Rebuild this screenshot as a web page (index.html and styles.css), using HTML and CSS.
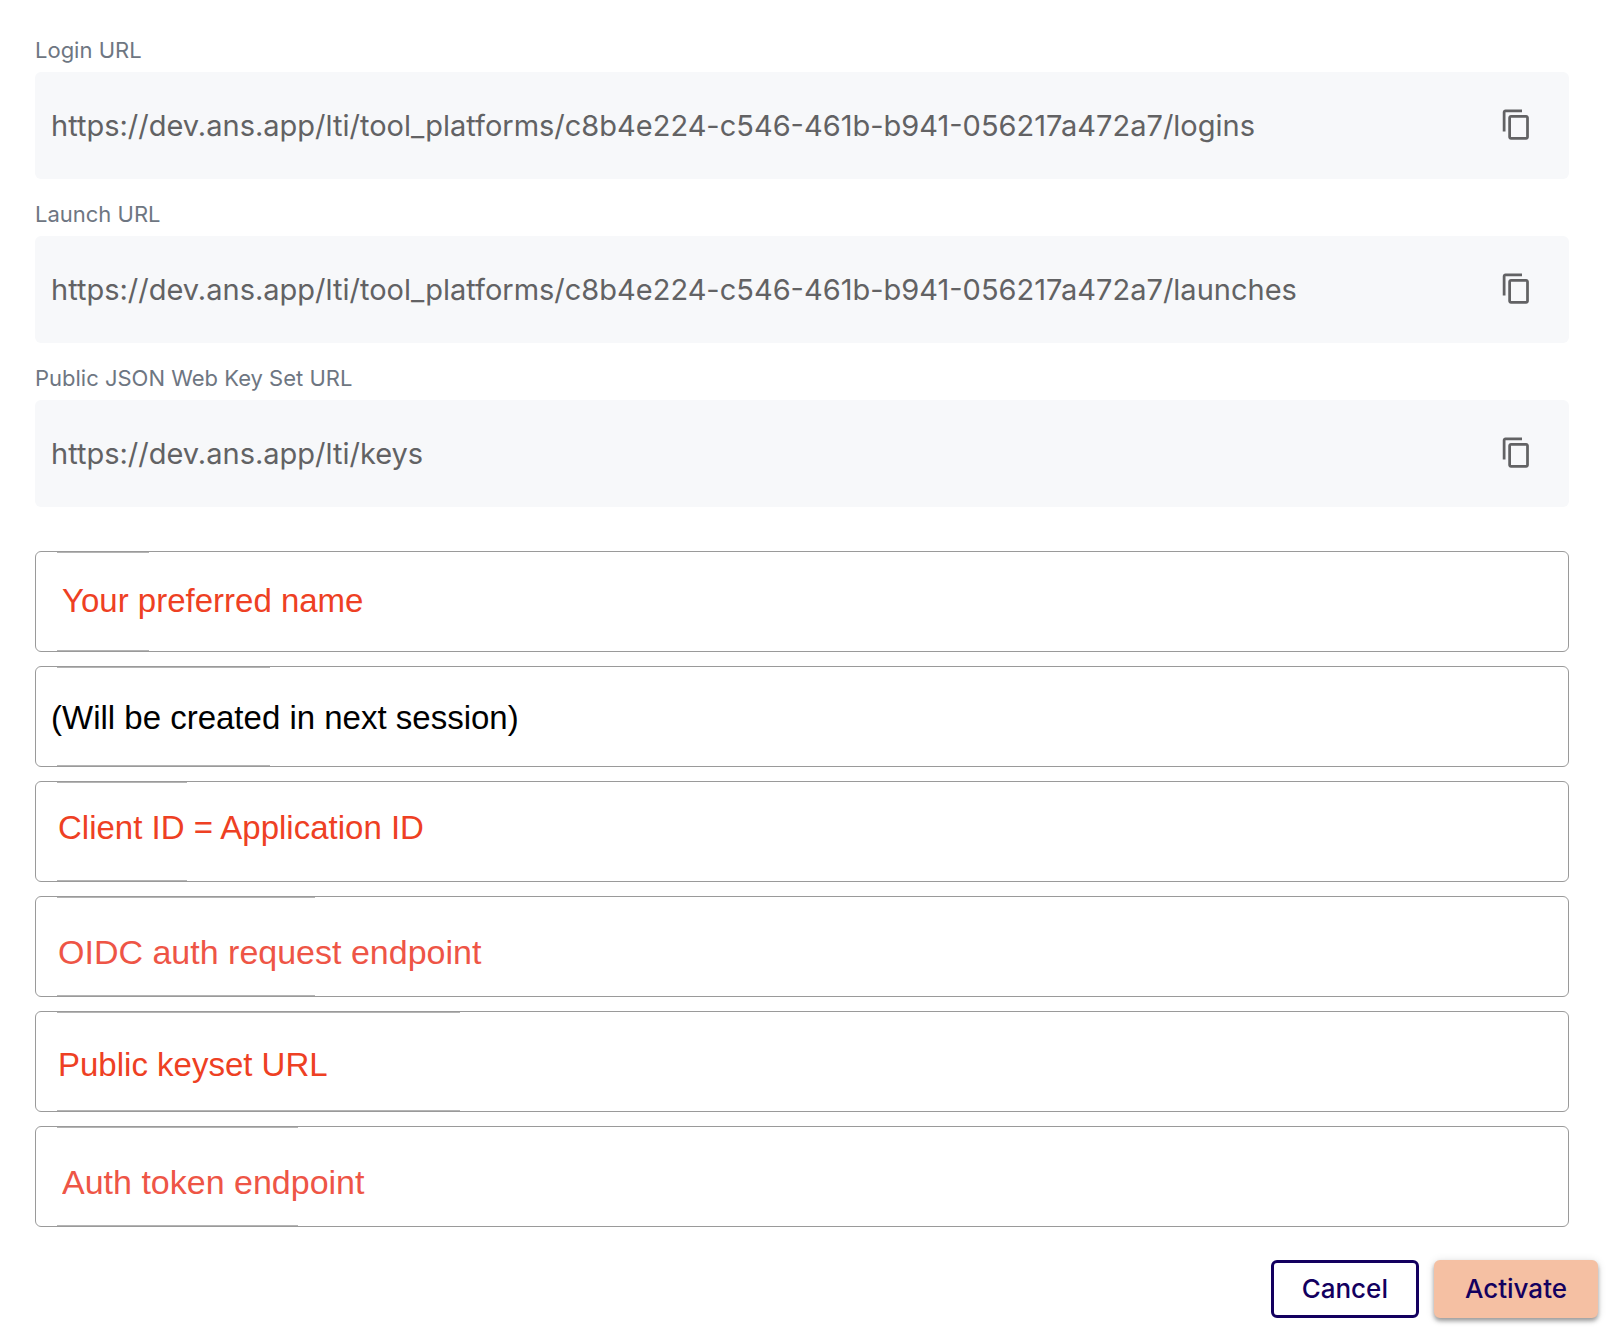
FILE: index.html
```html
<!DOCTYPE html>
<html lang="en">
<head>
<meta charset="utf-8">
<meta name="viewport" content="width=device-width, initial-scale=1">
<title>LTI tool platform</title>
<link rel="stylesheet" href="styles.css">
</head>
<body>
<svg class="sprite" width="0" height="0" aria-hidden="true">
  <symbol id="copy" viewBox="0 0 24 24">
    <path d="M16 1H4c-1.1 0-2 .9-2 2v14h2V3h12V1zm3 4H8c-1.1 0-2 .9-2 2v14c0 1.1.9 2 2 2h11c1.1 0 2-.9 2-2V7c0-1.1-.9-2-2-2zm0 16H8V7h11v14z"/>
  </symbol>
</svg>
<form class="platform">
  <section class="urls">
    <div class="url">
      <label class="url-label" for="login-url">Login URL</label>
      <div class="url-box">
        <input class="url-value" id="login-url" type="text" readonly value="https://dev.ans.app/lti/tool_platforms/c8b4e224-c546-461b-b941-056217a472a7/logins">
        <button class="copy" type="button" aria-label="Copy"><svg class="icon"><use href="#copy"/></svg></button>
      </div>
    </div>
    <div class="url">
      <label class="url-label" for="launch-url">Launch URL</label>
      <div class="url-box">
        <input class="url-value" id="launch-url" type="text" readonly value="https://dev.ans.app/lti/tool_platforms/c8b4e224-c546-461b-b941-056217a472a7/launches">
        <button class="copy" type="button" aria-label="Copy"><svg class="icon"><use href="#copy"/></svg></button>
      </div>
    </div>
    <div class="url">
      <label class="url-label" for="keys-url">Public JSON Web Key Set URL</label>
      <div class="url-box">
        <input class="url-value" id="keys-url" type="text" readonly value="https://dev.ans.app/lti/keys">
        <button class="copy" type="button" aria-label="Copy"><svg class="icon"><use href="#copy"/></svg></button>
      </div>
    </div>
  </section>

  <section class="fields">
    <div class="field">
      <span class="notch notch-name"></span>
      <input class="field-input indent-wide" type="text" aria-label="Name" value="Your preferred name">
    </div>
    <div class="field">
      <span class="notch notch-deployment"></span>
      <input class="field-input note" type="text" aria-label="Deployment ID" value="(Will be created in next session)">
    </div>
    <div class="field">
      <span class="notch notch-client"></span>
      <input class="field-input raised" type="text" aria-label="Client ID" value="Client ID = Application ID">
    </div>
    <div class="field">
      <span class="notch notch-auth"></span>
      <input class="field-input soft" type="text" aria-label="OIDC auth request endpoint" value="OIDC auth request endpoint">
    </div>
    <div class="field">
      <span class="notch notch-keyset"></span>
      <input class="field-input lowered" type="text" aria-label="Public keyset URL" value="Public keyset URL">
    </div>
    <div class="field">
      <span class="notch notch-token"></span>
      <input class="field-input indent-wide soft" type="text" aria-label="Auth token endpoint" value="Auth token endpoint">
    </div>
  </section>

  <div class="actions">
    <button class="btn btn-outline" type="button">Cancel</button>
    <button class="btn btn-primary" type="submit">Activate</button>
  </div>
</form>
</body>
</html>
```

FILE: styles.css
```css
* {
  box-sizing: border-box;
}

body {
  margin: 0;
  background: #fff;
  font-family: Inter, sans-serif;
}

.sprite {
  position: absolute;
}

.platform {
  padding: 37px 8px 16px 35px;
}

/* Read-only platform URLs */
.urls {
  display: flex;
  flex-direction: column;
  gap: 22px;
  margin-right: 29px;
}

.url {
  display: flex;
  flex-direction: column;
  gap: 9px;
}

.url-label {
  font-size: 22px;
  line-height: 26px;
  color: #6e7682;
}

.url-box {
  display: flex;
  align-items: center;
  padding: 0 36px 0 16px;
  border-radius: 6px;
  background: #f7f8fa;
}

.url-value {
  flex: 1;
  min-width: 0;
  height: 107px;
  padding: 0;
  border: 0;
  outline: 0;
  background: none;
  font: 29px Inter, sans-serif;
  color: #626264;
}

.copy {
  display: flex;
  padding: 0 0 3px;
  border: 0;
  background: none;
  cursor: pointer;
}

.icon {
  width: 33px;
  height: 33px;
  fill: #626264;
}

/* Outlined text fields */
.fields {
  display: flex;
  flex-direction: column;
  gap: 14px;
  margin: 44px 29px 0 0;
}

.field {
  position: relative;
  display: flex;
  border: 1px solid #9a9a9a;
  border-radius: 6px;
}

.notch {
  position: absolute;
  top: 0;
  bottom: 0;
  left: 21px;
  border: solid #b4b4b4;
  border-width: 1px 0;
  pointer-events: none;
}

.notch-name { width: 92px; }
.notch-deployment { width: 213px; }
.notch-client { width: 130px; }
.notch-auth { width: 258px; }
.notch-keyset { width: 403px; }
.notch-token { width: 241px; }

.field-input {
  flex: 1;
  min-width: 0;
  height: 99px;
  padding: 0 22px 2px;
  border: 0;
  outline: 0;
  background: none;
  font: 33px "Liberation Sans", Arial, sans-serif;
  color: #ee4023;
}

.indent-wide { padding-left: 26px; }
.raised { padding-bottom: 8px; }
.lowered { padding-top: 8px; }

.note {
  padding: 3px 15px 0;
  color: #000;
}

.soft {
  padding-top: 13px;
  font-size: 34px;
  color: #ee5546;
}

/* Form actions */
.actions {
  display: flex;
  justify-content: flex-end;
  gap: 15px;
  margin-top: 33px;
}

.btn {
  height: 58px;
  padding: 0 28px 2px;
  border: 3px solid #13005f;
  border-radius: 6px;
  background: #fff;
  font: 500 26px Inter, sans-serif;
  color: #13005f;
  cursor: pointer;
}

.btn-primary {
  border-color: #f5c0a3;
  background: #f5c0a3;
  box-shadow: 0 3px 4px rgba(0, 0, 0, .35), 0 1px 10px rgba(0, 0, 0, .12);
}
```
